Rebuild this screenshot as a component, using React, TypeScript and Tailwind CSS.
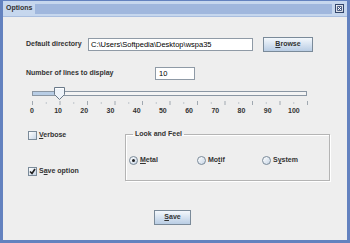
import React from "react";

const font = { fontFamily: '"Liberation Sans", Arial, sans-serif' };

const U = ({ children }: { children: React.ReactNode }) => (
  <span className="underline underline-offset-[1px]">{children}</span>
);

const Checkbox = ({ checked }: { checked?: boolean }) => (
  <span className="w-[9px] h-[9px] border border-[#7a8a99] bg-gradient-to-br from-white to-[#c8d6e6] flex items-center justify-center">
    {checked && (
      <svg width="7" height="7" viewBox="0 0 7 7">
        <path d="M1 3.5 L3 5.5 L6 1" stroke="#222" strokeWidth="1.6" fill="none" />
      </svg>
    )}
  </span>
);

const Radio = ({ selected }: { selected?: boolean }) => (
  <span className="w-[9px] h-[9px] rounded-full border border-[#7a8a99] bg-gradient-to-br from-white to-[#c8d6e6] flex items-center justify-center">
    {selected && <span className="w-[3px] h-[3px] rounded-full bg-[#222]" />}
  </span>
);

const Button = ({ children, w }: { children: React.ReactNode; w: string }) => (
  <div
    className={`${w} h-[15px] border border-[#7a8a99] bg-gradient-to-b from-[#f4f8fc] to-[#b9cde4] flex items-center justify-center text-[7px] font-bold text-[#333]`}
  >
    {children}
  </div>
);

export default function App() {
  const labels = [0, 10, 20, 30, 40, 50, 60, 70, 80, 90, 100];
  const ticks = Array.from({ length: 21 }, (_, i) => i);

  return (
    <div
      className="w-[350px] h-[243px] bg-[#6382bf] pt-[1px] px-[3px] pb-[3px] flex flex-col"
      style={font}
    >
      {/* title bar */}
      <div className="h-[16px] bg-[#c6d7ee] border-b border-[#a9bedf] flex items-center pl-[3px] pr-[3px]">
        <span className="text-[7px] font-bold text-[#333] mr-[3px]">Options</span>
        <div className="flex-1 h-[10px] bg-[image:radial-gradient(circle,#9db5dc_0.7px,transparent_0.8px)] bg-[length:2px_2px]" />
        <div className="ml-[3px] w-[9px] h-[9px] bg-[#4b5f86] border border-[#32466b] flex items-center justify-center">
          <svg width="7" height="7" viewBox="0 0 7 7">
            <rect x="0.5" y="0.5" width="6" height="6" fill="none" stroke="#fff" strokeWidth="0.8" />
            <path d="M1.8 1.8 L5.2 5.2 M5.2 1.8 L1.8 5.2" stroke="#fff" strokeWidth="1" />
          </svg>
        </div>
      </div>

      {/* content */}
      <div className="flex-1 bg-[#eeeeee] flex flex-col text-[#333]">
        {/* default directory */}
        <div className="mt-[20px] h-[15px] flex items-center pl-[23px]">
          <span className="w-[62px] text-[7px] font-bold">Default directory</span>
          <div className="w-[165px] h-[13px] border border-[#8f9aa6] bg-white flex items-center pl-[2px] text-[7.5px] text-black">
            C:\Users\Softpedia\Desktop\wspa35
          </div>
          <div className="ml-[10px]">
            <Button w="w-[50px]">
              <U>B</U>rowse
            </Button>
          </div>
        </div>

        {/* number of lines */}
        <div className="mt-[15px] h-[13px] flex items-center pl-[23px]">
          <span className="w-[129px] text-[7px] font-bold">Number of lines to display</span>
          <div className="w-[40px] h-[13px] border border-[#8f9aa6] bg-white flex items-center pl-[3px] text-[7.5px] text-black">
            10
          </div>
        </div>

        {/* slider */}
        <div className="mt-[7px] ml-[29px] w-[275px] flex flex-col">
          <div className="relative h-[13px]">
            <div className="mt-[4px] h-[5px] border border-[#8a96a3] bg-[#f4f4f4] flex">
              <div className="w-[27px] h-full bg-[#b8cde5]" />
            </div>
            <svg className="absolute left-[22px] top-0" width="11" height="13" viewBox="0 0 11 13">
              <path d="M0.5 0.5 H10.5 V7.5 L5.5 12.5 L0.5 7.5 Z" fill="#eef3f9" stroke="#6b7a8a" />
              <path d="M1.5 1.5 H9.5 V3" stroke="#fff" fill="none" />
            </svg>
          </div>
          <svg className="mt-[1px]" width="276" height="4" viewBox="0 0 276 4">
            {ticks.map((i) => (
              <line
                key={i}
                x1={0.5 + i * 13.75}
                x2={0.5 + i * 13.75}
                y1={i % 2 === 0 ? 0 : 1}
                y2={i % 2 === 0 ? 4 : 3}
                stroke={i % 2 === 0 ? "#a0a8b0" : "#c0c6cc"}
                strokeWidth="1"
              />
            ))}
          </svg>
          <div className="mt-[2px] ml-[-13.25px] flex h-[8px] items-center">
            {labels.map((l) => (
              <span key={l} className="w-[27.5px] text-center text-[7px] font-bold leading-[8px]">
                {l}
              </span>
            ))}
          </div>
        </div>

        {/* options */}
        <div className="mt-[15px] flex">
          <div className="w-[122px] pl-[25px] flex flex-col">
            <div className="h-[10px] flex items-center gap-[2px]">
              <Checkbox />
              <span className="text-[7px] font-bold">
                <U>V</U>erbose
              </span>
            </div>
            <div className="mt-[26px] h-[10px] flex items-center gap-[2px]">
              <Checkbox checked />
              <span className="text-[7px] font-bold">
                S<U>a</U>ve option
              </span>
            </div>
          </div>
          <fieldset className="w-[205px] border border-[#b4b4b4] shadow-[inset_1px_1px_0_#fff,1px_1px_0_#fff] pl-[3px] pb-[15px]">
            <legend className="ml-[4px] px-[2px] text-[7px] font-bold leading-[8px]">Look and Feel</legend>
            <div className="mt-[17px] h-[10px] flex items-center">
              <div className="w-[68px] flex items-center gap-[2px]">
                <Radio selected />
                <span className="text-[7px] font-bold">
                  <U>M</U>etal
                </span>
              </div>
              <div className="w-[65px] flex items-center gap-[2px]">
                <Radio />
                <span className="text-[7px] font-bold">
                  Mo<U>t</U>if
                </span>
              </div>
              <div className="flex items-center gap-[2px]">
                <Radio />
                <span className="text-[7px] font-bold">
                  S<U>y</U>stem
                </span>
              </div>
            </div>
          </fieldset>
        </div>

        {/* save */}
        <div className="mt-[29px] pl-[151px]">
          <Button w="w-[37px]">
            <U>S</U>ave
          </Button>
        </div>
      </div>
    </div>
  );
}
